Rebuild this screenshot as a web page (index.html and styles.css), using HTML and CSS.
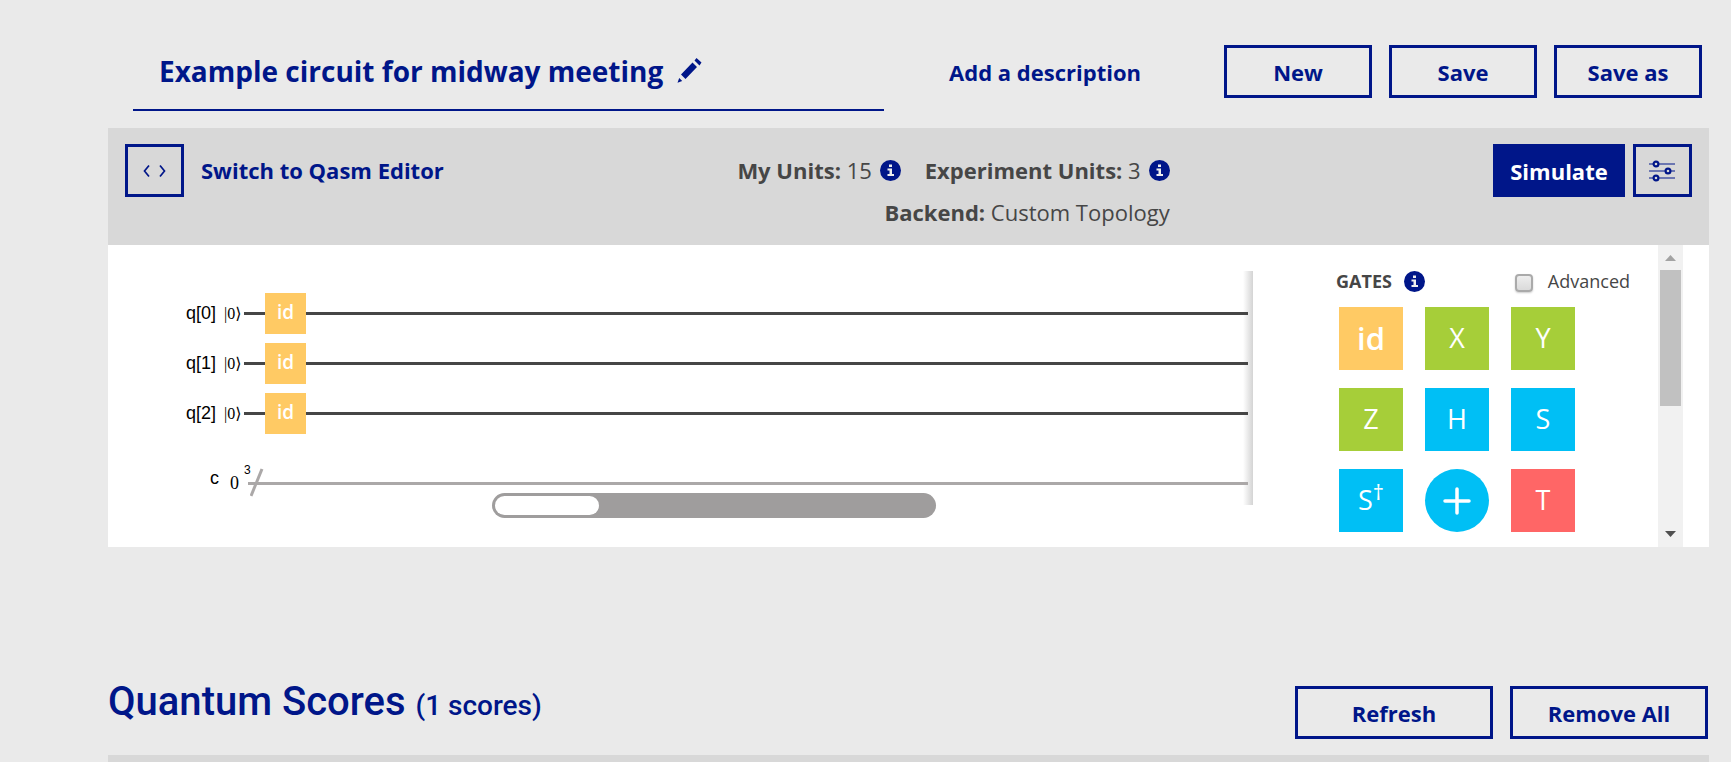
FILE: index.html
```html
<!DOCTYPE html>
<html lang="en">
<head>
<meta charset="utf-8">
<title>Quantum Composer</title>
<link rel="stylesheet" href="styles.css">
</head>
<body>
<svg class="defs" aria-hidden="true">
  <symbol id="info" viewBox="0 0 21 21">
    <circle cx="10.500" cy="10.500" r="10.500" fill="#001689"/>
    <path fill="#eee" d="M9 4.500h3v2.500H9zM7.500 8.500H12v5.500h2v2H7.500v-2h2v-3.500h-2z"/>
  </symbol>
</svg>
<main class="page">
  <header class="header">
    <div class="title-box">
      <h1 class="title">Example circuit for midway meeting</h1>
      <button class="plain" aria-label="Edit name">
        <svg width="25" height="25" viewBox="0 0 25 25" fill="#001689"><path d="M15.500 4.500l4.500 4.500L8.500 21 4 16.500zM17.500 2.500l2-2.500L24.500 4.500l-2 3zM2.200 20l3 3L.5 24.800z"/></svg>
      </button>
    </div>
    <button class="plain describe">Add a description</button>
    <div class="actions">
      <button class="btn action">New</button>
      <button class="btn action">Save</button>
      <button class="btn action">Save as</button>
    </div>
  </header>

  <section class="toolbar">
    <div class="switch">
      <button class="btn square" id="qasm" aria-label="Code">
        <svg width="24" height="14" viewBox="0 0 24 14" fill="none" stroke="#001689" stroke-width="1.700"><path d="M6 1.500L1.500 7 6 12.500M17 1.500L21.500 7 17 12.500"/></svg>
      </button>
      <label class="switch-label" for="qasm">Switch to Qasm Editor</label>
    </div>
    <div class="status">
      <div class="status-row">
        <span class="stat"><span><b>My Units:</b> 15</span><svg class="info"><use href="#info"/></svg></span>
        <span class="stat"><span><b>Experiment Units:</b> 3</span><svg class="info"><use href="#info"/></svg></span>
      </div>
      <div class="status-row"><span><b>Backend:</b> Custom Topology</span></div>
    </div>
    <div class="run">
      <button class="btn simulate">Simulate</button>
      <button class="btn square" aria-label="Settings">
        <svg width="26" height="22" viewBox="0 0 26 22" fill="none" stroke="#001689"><path stroke-width="1.200" d="M0 4h4M10 4h16M0 11h16M22 11h4M0 18h4M10 18h16"/><g stroke-width="2.200"><circle cx="7" cy="4" r="2.400"/><circle cx="19" cy="11" r="2.400"/><circle cx="7" cy="18" r="2.400"/></g></svg>
      </button>
    </div>
  </section>

  <section class="workspace">
    <div class="circuit">
      <div class="wire-row"><span class="reg">q[0]</span><span class="ket">|0⟩</span><div class="wire"><span class="placed">id</span></div></div>
      <div class="wire-row"><span class="reg">q[1]</span><span class="ket">|0⟩</span><div class="wire"><span class="placed">id</span></div></div>
      <div class="wire-row"><span class="reg">q[2]</span><span class="ket">|0⟩</span><div class="wire"><span class="placed">id</span></div></div>
      <div class="wire-row classical">
        <span class="reg">c</span><span class="ket">0</span>
        <div class="wire bus"><span class="count">3</span><svg width="14" height="30" viewBox="0 0 14 30"><path d="M1 28L12 1" stroke="#aba8a8" stroke-width="3"/></svg></div>
      </div>
      <input class="pan" type="range" min="0" max="100" value="0" aria-label="Scroll circuit">
    </div>
    <aside class="gates">
      <div class="gates-head">
        <h2 class="gates-title">GATES</h2><svg class="info"><use href="#info"/></svg>
        <label class="advanced"><input class="check" type="checkbox">Advanced</label>
      </div>
      <div class="palette">
        <button class="gate orange">id</button>
        <button class="gate green">X</button>
        <button class="gate green">Y</button>
        <button class="gate green">Z</button>
        <button class="gate blue">H</button>
        <button class="gate blue">S</button>
        <button class="gate blue"><span>S<sup class="dagger">†</sup></span></button>
        <button class="gate blue round" aria-label="CNOT"><svg width="28" height="28" viewBox="0 0 28 28" stroke="#fff" stroke-width="3.500" stroke-linecap="round"><path d="M14 2v24M2 14h24"/></svg></button>
        <button class="gate red">T</button>
      </div>
    </aside>
    <div class="scrollbar">
      <svg width="11" height="6" viewBox="0 0 11 6"><path d="M0 6L5.500 0 11 6z" fill="#a3a3a3"/></svg>
      <div class="scroll-track"><div class="scroll-thumb"></div></div>
      <svg width="11" height="6" viewBox="0 0 11 6"><path d="M0 0h11L5.500 6z" fill="#505050"/></svg>
    </div>
  </section>

  <section class="scores">
    <h2 class="scores-title">Quantum Scores <small class="scores-count">(1 scores)</small></h2>
    <div class="actions">
      <button class="btn wide">Refresh</button>
      <button class="btn wide">Remove All</button>
    </div>
  </section>
  <div class="list-top"></div>
</main>
</body>
</html>
```
FILE: styles.css
```css
* { box-sizing: border-box; }
body {
  margin: 0;
  background: #eaeaea;
  color: #464646;
  font: 22px/42px "Open Sans", "Noto Sans", sans-serif;
}
button { font: inherit; cursor: pointer; }
b { font-weight: 700; }
svg { display: block; flex: none; }
.defs { display: none; }
.page { padding: 45px 22px 0 108px; }

.header {
  display: flex;
  align-items: flex-start;
  padding: 0 7px 17px 25px;
}
.title-box {
  flex: 0 0 751px;
  display: flex;
  align-items: center;
  gap: 14px;
  height: 66px;
  padding: 0 0 13px 26px;
  border-bottom: 2px solid #001689;
}
.title {
  margin: 0;
  color: #001689;
  font-size: 28px;
  font-weight: 700;
  white-space: nowrap;
}
.plain {
  padding: 0;
  border: 0;
  background: none;
  color: #001689;
  font-weight: 700;
}
.describe {
  height: 53px;
  margin-left: auto;
  margin-right: 83px;
  white-space: nowrap;
}
.actions { display: flex; gap: 17px; }
.btn {
  display: flex;
  align-items: center;
  justify-content: center;
  height: 53px;
  padding: 0;
  border: 3px solid #001689;
  background: none;
  color: #001689;
  font-weight: 700;
}
.action { width: 148px; }
.wide { width: 198px; }
.square { width: 59px; }

.toolbar {
  display: grid;
  grid-template-columns: 1fr 1fr 1fr;
  padding: 16px 17px 12px;
  background: #d8d8d8;
}
.switch { display: flex; gap: 17px; }
.switch-label {
  color: #001689;
  font-weight: 700;
  line-height: 53px;
  white-space: nowrap;
}
.status { padding-top: 5px; }
.status-row {
  display: flex;
  justify-content: flex-end;
  gap: 24px;
  white-space: nowrap;
}
.stat { display: flex; align-items: center; gap: 8px; }
.info { width: 21px; height: 21px; }
.run { display: flex; justify-content: flex-end; gap: 8px; }
.simulate { width: 132px; background: #001689; color: #fff; }

.workspace {
  display: flex;
  height: 302px;
  padding-right: 26px;
  background: #fff;
}
.circuit {
  flex: 1;
  display: flex;
  flex-direction: column;
  margin: 26px 0 0;
  padding: 17px 5px 0 78px;
  height: 234px;
  background: linear-gradient(to left, #d4d4d4, #fff) right / 10px 100% no-repeat;
}
.wire-row {
  display: flex;
  align-items: center;
  height: 50px;
  color: #000;
  font: 18px/24px "Liberation Sans", sans-serif;
}
.reg { width: 34px; }
.ket {
  width: 24px;
  padding: 2px 0 0 4px;
  font: 16px/24px "Liberation Serif", "DejaVu Serif", serif;
}
.wire {
  flex: 1;
  display: flex;
  align-items: center;
  height: 50px;
  padding-left: 21px;
  background: linear-gradient(#464646, #464646) center / 100% 3px no-repeat;
}
.placed {
  width: 41px;
  height: 41px;
  background: #ffca64;
  color: #fff;
  font: 600 19px/38px "Open Sans", sans-serif;
  text-align: center;
}
.classical { margin-top: 20px; }
.classical .reg { padding: 0 0 10px 24px; }
.classical .ket { padding: 0 0 0 10px; font-size: 18px; }
.bus {
  padding-left: 0;
  background: linear-gradient(#aba8a8, #aba8a8) right / calc(100% - 4px) 3px no-repeat;
}
.count { width: 6px; padding-bottom: 26px; font-size: 12px; }
.pan {
  appearance: none;
  flex: none;
  width: 444px;
  height: 25px;
  margin: -15px auto 0 306px;
  padding: 3px;
  border-radius: 13px;
  background: #9f9d9d;
}
.pan::-webkit-slider-thumb {
  appearance: none;
  width: 104px;
  height: 19px;
  border-radius: 10px;
  background: #fff;
}

.gates { width: 322px; padding: 24px 28px 0 0; margin-left: 83px; }
.gates-head { display: flex; align-items: center; height: 24px; }
.gates-title { margin: 0 12px 0 0; font-size: 18px; font-weight: 700; }
.advanced {
  display: flex;
  align-items: center;
  gap: 15px;
  margin-left: auto;
  font-size: 18px;
}
.check {
  appearance: none;
  width: 18px;
  height: 18px;
  margin: 4px 0 0;
  border: 2px solid #aaa;
  border-radius: 4px;
  background: linear-gradient(#eee, #dadada);
  box-shadow: 0 1px 2px #ccc;
}
.palette {
  display: grid;
  grid-template-columns: repeat(3, 64px);
  gap: 18px 22px;
  padding: 14px 0 0 3px;
}
.gate {
  display: flex;
  align-items: center;
  justify-content: center;
  height: 63px;
  padding: 0 0 2px;
  border: 0;
  color: #fff;
  font: 27px/32px "Open Sans", sans-serif;
}
.orange { background: #ffca64; font-size: 31px; font-weight: 600; }
.green { background: #a6ce39; }
.blue { background: #00bff5; }
.red { background: #ff6666; }
.round { padding: 0; border-radius: 50%; }
.dagger { font-size: 22px; line-height: 0; }

.scrollbar {
  display: flex;
  flex-direction: column;
  align-items: center;
  width: 25px;
  padding: 10px 2px;
  background: #f1f1f1;
}
.scroll-track { flex: 1; align-self: stretch; padding: 9px 0; }
.scroll-thumb { height: 136px; background: #c1c1c1; }

.scores {
  display: flex;
  align-items: flex-start;
  justify-content: space-between;
  padding: 139px 1px 16px 0;
}
.scores-title {
  margin: 0;
  color: #001689;
  font-family: "Roboto", "Open Sans", sans-serif;
  font-size: 40px;
  font-weight: 500;
  line-height: 32px;
}
.scores-count { font-size: 28px; }
.list-top { height: 7px; background: #d8d8d8; }
```
